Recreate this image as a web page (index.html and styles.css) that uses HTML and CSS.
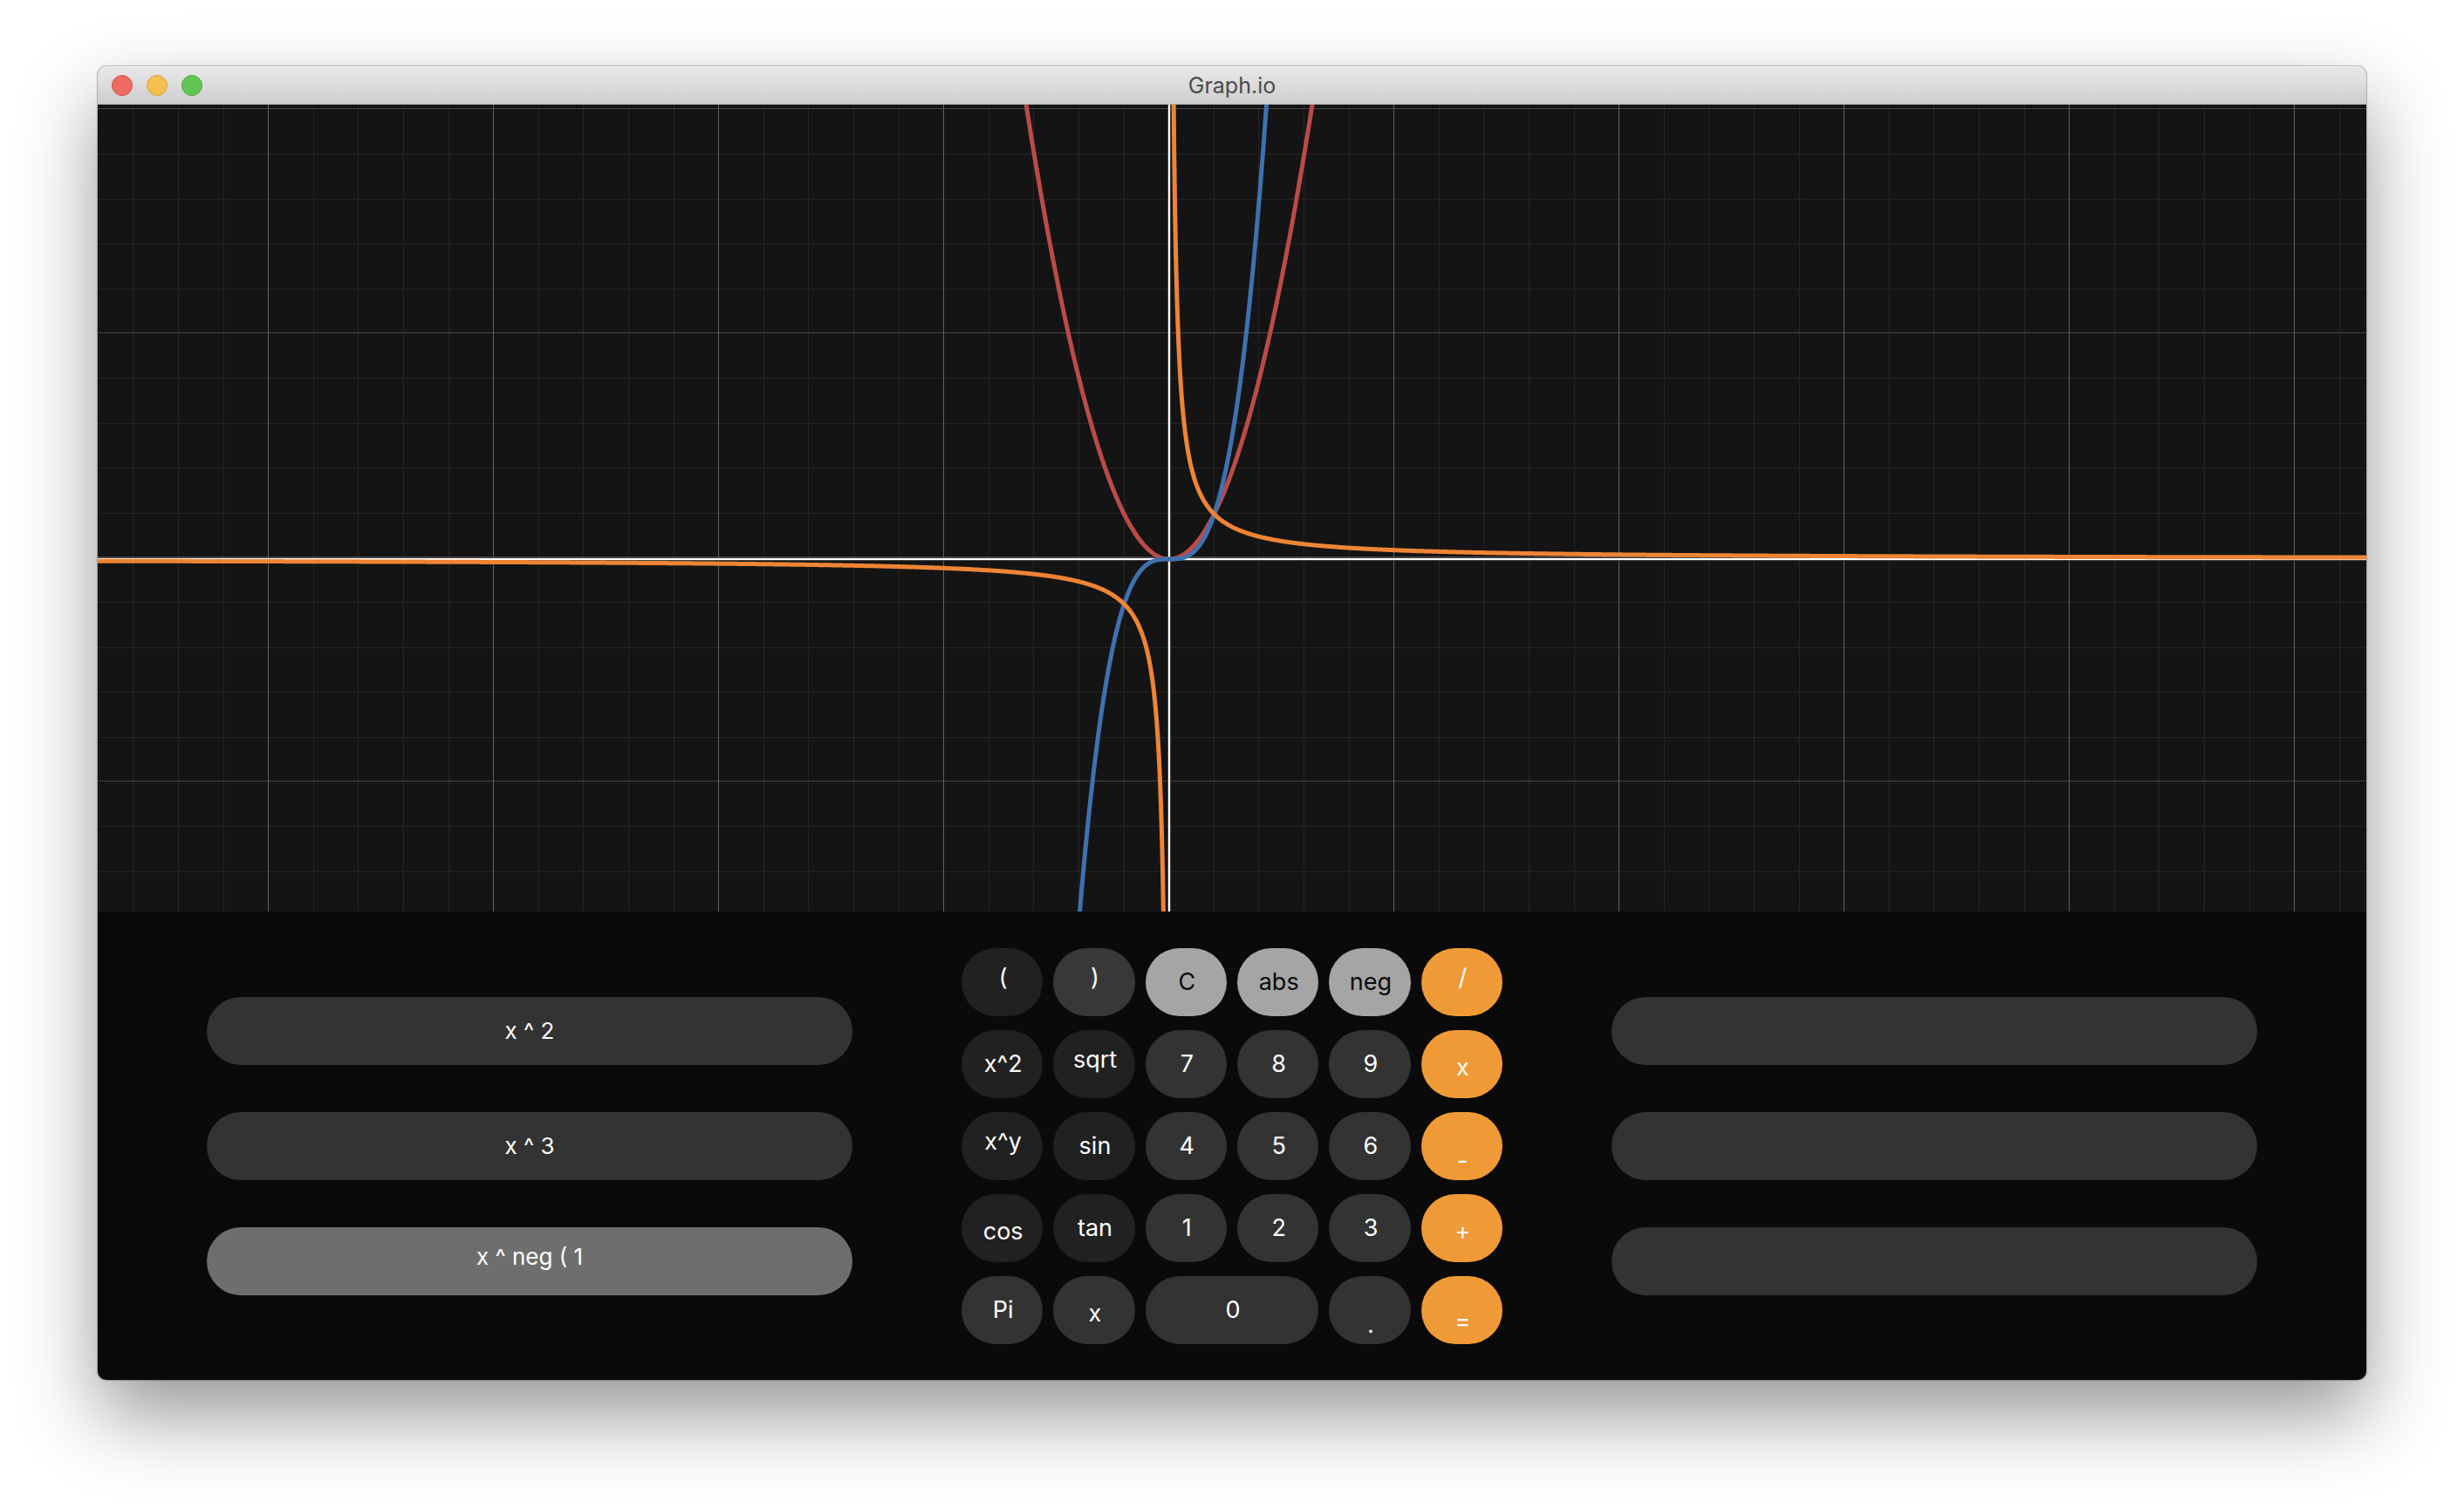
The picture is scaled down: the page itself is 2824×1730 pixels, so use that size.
FILE: index.html
```html
<!DOCTYPE html>
<html lang="en">
<head>
<meta charset="utf-8">
<title>Graph.io</title>
<link rel="stylesheet" href="styles.css">
</head>
<body>
<main class="window">
  <header class="titlebar">
    <div class="lights">
      <button class="light light-close" aria-label="Close"></button>
      <button class="light light-minimize" aria-label="Minimize"></button>
      <button class="light light-zoom" aria-label="Zoom"></button>
    </div>
    <h1 class="title">Graph.io</h1>
  </header>

  <svg class="graph" viewBox="0 0 2600 925" role="img" aria-label="Graph of the entered functions">
    <defs>
      <pattern id="columns" x="195" y="0" width="258" height="925" patternUnits="userSpaceOnUse">
        <path class="minor" d="M52 0h1v925h-1zM103 0h1v925h-1zM155 0h1v925h-1zM207 0h1v925h-1z"/>
      </pattern>
      <pattern id="rows" x="0" y="4" width="2600" height="257" patternUnits="userSpaceOnUse">
        <path class="minor" d="M0 52h2600v1H0zM0 104h2600v1H0zM0 155h2600v1H0zM0 207h2600v1H0z"/>
      </pattern>
      <pattern id="major-rows" x="0" y="4" width="2600" height="257" patternUnits="userSpaceOnUse">
        <path class="major-row" d="M0 0h2600v1H0z"/>
      </pattern>
      <pattern id="major-columns" x="195" y="0" width="258" height="925" patternUnits="userSpaceOnUse">
        <path class="major-column" d="M0 0h1v925H0z"/>
      </pattern>
    </defs>
    <rect width="2600" height="925" fill="url(#columns)"/>
    <rect width="2600" height="925" fill="url(#rows)"/>
    <rect width="2600" height="925" fill="url(#major-rows)"/>
    <rect width="2600" height="925" fill="url(#major-columns)"/>
    <path class="axis-edge" d="M0 521H2600M1228 0V925"/>
    <path class="axis" d="M0 521H2600M1228 0V925"/>
    <path class="curve curve-red" data-curve="square"/>
    <path class="curve curve-blue" data-curve="cube"/>
    <path class="curve curve-orange" data-curve="inverse"/>
  </svg>

  <section class="panel">
    <div class="slots">
      <button class="slot">x ^ 2</button>
      <button class="slot">x ^ 3</button>
      <button class="slot slot-active raised">x ^ neg ( 1</button>
    </div>
    <div class="keys">
      <button class="key key-function raised">(</button>
      <button class="key key-hover raised">)</button>
      <button class="key key-light">C</button>
      <button class="key key-light">abs</button>
      <button class="key key-light">neg</button>
      <button class="key key-operator raised">/</button>

      <button class="key key-function">x^2</button>
      <button class="key key-function raised">sqrt</button>
      <button class="key">7</button>
      <button class="key">8</button>
      <button class="key">9</button>
      <button class="key key-operator lowered">x</button>

      <button class="key key-function raised">x^y</button>
      <button class="key key-function">sin</button>
      <button class="key">4</button>
      <button class="key">5</button>
      <button class="key">6</button>
      <button class="key key-operator bottom">-</button>

      <button class="key key-function lowered">cos</button>
      <button class="key key-function">tan</button>
      <button class="key">1</button>
      <button class="key">2</button>
      <button class="key">3</button>
      <button class="key key-operator lowered">+</button>

      <button class="key">Pi</button>
      <button class="key lowered">x</button>
      <button class="key key-wide">0</button>
      <button class="key bottom">.</button>
      <button class="key key-operator low">=</button>
    </div>
    <div class="slots">
      <button class="slot" aria-label="Function 4"></button>
      <button class="slot" aria-label="Function 5"></button>
      <button class="slot" aria-label="Function 6"></button>
    </div>
  </section>
</main>
<script src="script.js"></script>
</body>
</html>
```
FILE: styles.css
```css
* { box-sizing: border-box; }

body {
  margin: 0;
  padding: 76px 112px 148px;
  background: #fff;
  font-family: Inter, "Liberation Sans", sans-serif;
}

button {
  margin: 0;
  border: 0;
  padding: 0;
  font: inherit;
  color: inherit;
}

.window {
  border-radius: 10px;
  background: #0a0a0a;
  box-shadow: 0 0 1px 1px rgba(0, 0, 0, 0.25), 0 40px 90px rgba(0, 0, 0, 0.42);
}

.titlebar {
  display: grid;
  grid-template-columns: 1fr auto 1fr;
  align-items: center;
  height: 44px;
  padding: 1px 16px 0;
  border-bottom: 1px solid #adadad;
  border-radius: 10px 10px 0 0;
  background: linear-gradient(#e8e8e8, #cecece);
  box-shadow: inset 0 1px #f6f6f6;
}

.lights {
  display: flex;
  gap: 16px;
}

.light {
  width: 24px;
  height: 24px;
  border: 1px solid;
  border-radius: 50%;
}

.light-close { background: #ed6b60; border-color: #d4544a; }
.light-minimize { background: #f5bf4f; border-color: #d8a040; }
.light-zoom { background: #62c655; border-color: #51a83f; }

.title {
  margin: 0;
  font-size: 25px;
  line-height: 32px;
  font-weight: 400;
  color: #4a4a4a;
}

.graph {
  display: block;
  width: 100%;
  height: auto;
  background: #141414;
}

.minor { fill: #252525; }
.major-row { fill: #464646; }
.major-column { fill: #626262; }
.axis { stroke: #fff; stroke-width: 2; }
.axis-edge { stroke: #444; stroke-width: 4; }

.curve {
  fill: none;
  stroke-width: 5;
  stroke-linejoin: round;
}

.curve-red { stroke: #bb4b46; }
.curve-blue { stroke: #3f71b1; }
.curve-orange { stroke: #ee8434; }

.panel {
  display: grid;
  grid-template-columns: 37fr 31fr 37fr;
  align-items: center;
  gap: 125px;
  padding: 42px 125px 41px;
  color: #fff;
  font-size: 27px;
  line-height: 34px;
}

.slots {
  display: grid;
  gap: 54px;
}

.keys {
  display: grid;
  grid-template-columns: repeat(6, 1fr);
  gap: 16px 12px;
}

.slot,
.key {
  display: flex;
  align-items: center;
  justify-content: center;
  height: 78px;
  border-radius: 39px;
  background: #333;
}

.slot { font-size: 26px; }
.key { padding-left: 2px; }
.slot-active { background: #6e6e6e; }
.key-function { background: #212121; }
.key-hover { background: #383838; }
.key-light { background: #a5a5a5; color: #0a0a0a; }
.key-operator { background: #f09a37; }
.key-wide { grid-column: span 2; }

.raised { padding-bottom: 10px; }
.lowered { padding-top: 8px; }
.low { padding-top: 26px; }
.bottom { padding-top: 34px; }
```
FILE: script.js
```js
const unit = 51.6;
const originX = 1228;
const originY = 521;

const curves = {
  square: { f: x => x * x, ranges: [[-4, 4]] },
  cube: { f: x => x ** 3, ranges: [[-3, 3]] },
  inverse: { f: x => 1 / x, ranges: [[-24, -0.05], [0.05, 27]] }
};

// Samples a function over a range and returns SVG path data.
function plot(f, [from, to]) {
  const points = [];
  for (let x = from; x <= to; x += 0.02) {
    points.push((originX + x * unit).toFixed(2) + " " + (originY - f(x) * unit).toFixed(2));
  }
  return "M" + points.join("L");
}

document.querySelectorAll("[data-curve]").forEach(path => {
  const { f, ranges } = curves[path.dataset.curve];
  path.setAttribute("d", ranges.map(range => plot(f, range)).join(""));
});
```
